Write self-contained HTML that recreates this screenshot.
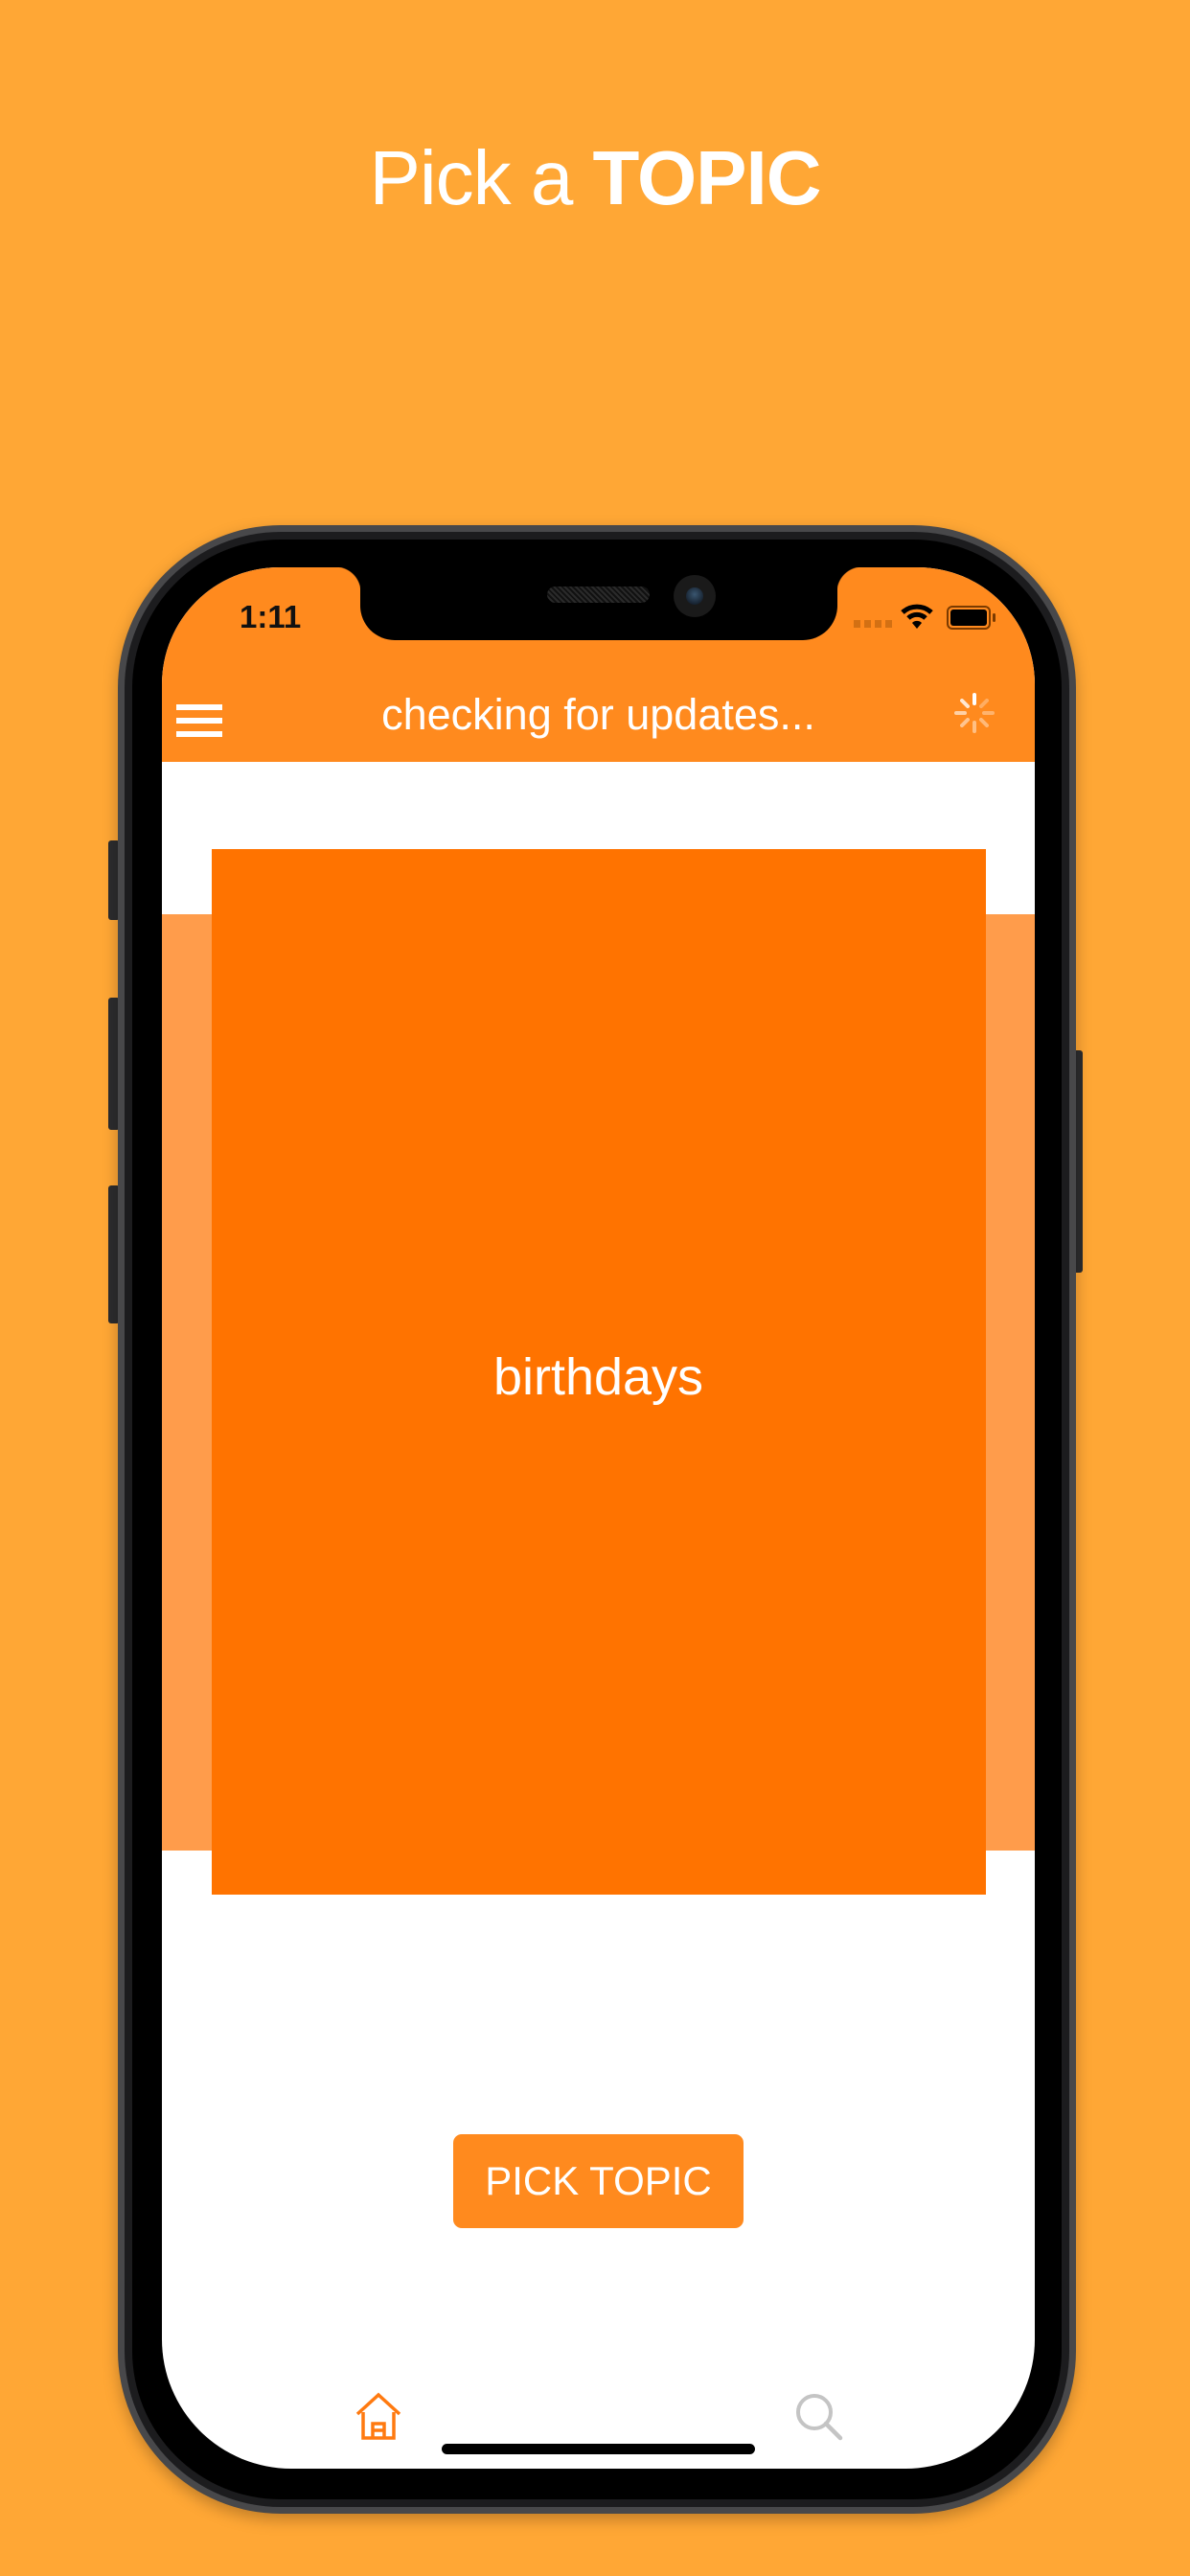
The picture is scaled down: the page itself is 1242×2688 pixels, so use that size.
<!DOCTYPE html>
<html><head><meta charset="utf-8"><style>
*{margin:0;padding:0;box-sizing:border-box}
body{width:1242px;height:2688px;background:#FFA735;position:relative;overflow:hidden;font-family:"Liberation Sans",sans-serif}
.abs{position:absolute}
h1{position:absolute;top:140px;left:0;width:1242px;text-align:center;color:#fff;font-weight:400;font-size:80px;letter-spacing:-1px}
h1 b{font-weight:700}
.btn{background:#2c2c2e}
</style></head><body>
<h1>Pick a <b>TOPIC</b></h1>
<div class="abs btn" style="left:113px;top:877px;width:12px;height:83px;border-radius:3px"></div>
<div class="abs btn" style="left:113px;top:1041px;width:12px;height:138px;border-radius:3px"></div>
<div class="abs btn" style="left:113px;top:1237px;width:12px;height:144px;border-radius:3px"></div>
<div class="abs btn" style="left:1118px;top:1096px;width:12px;height:232px;border-radius:3px"></div>
<div class="abs" style="left:123px;top:548px;width:1000px;height:2075px;border-radius:170px;background:#48484a;box-shadow:0 6px 16px rgba(0,0,0,.25)"></div>
<div class="abs" style="left:130px;top:555px;width:986px;height:2061px;border-radius:163px;background:#1c1c1e"></div>
<div class="abs" style="left:138px;top:563px;width:970px;height:2045px;border-radius:155px;background:#000"></div>
<div class="abs" style="left:169px;top:592px;width:911px;height:1984px;border-radius:122px 122px 135px 135px;background:#fff;overflow:hidden">
  <div class="abs" style="left:0;top:0;width:911px;height:203px;background:#FF8A1E"></div>
  <div class="abs" style="left:0;top:362px;width:911px;height:977px;background:#FF9C4B"></div>
  <div class="abs" style="left:52px;top:294px;width:808px;height:1091px;background:#FF7300"></div>
  <div class="abs" style="left:0;top:814px;width:911px;text-align:center;color:#fff;font-size:54px">birthdays</div>
  <div class="abs" style="left:304px;top:1635px;width:303px;height:98px;border-radius:9px;background:#FF8A1E;color:#fff;font-size:42px;text-align:center;line-height:98px">PICK TOPIC</div>
  <div class="abs" style="left:81px;top:33px;color:#111;font-size:33px;font-weight:700">1:11</div>
  <div class="abs" style="left:722px;top:55px;width:40px;height:8px;background:repeating-linear-gradient(90deg,#c86a10 0 7px,transparent 7px 11px);opacity:.8"></div>
  <svg class="abs" style="left:770px;top:36px" width="36" height="30" viewBox="0 0 36 30"><path d="M3 11 A22 22 0 0 1 33 11" stroke="#000" stroke-width="5" fill="none"/><path d="M9 17 A13 13 0 0 1 27 17" stroke="#000" stroke-width="5" fill="none"/><path d="M13 22 L18 28 L23 22 A7 7 0 0 0 13 22Z" fill="#000"/></svg>
  <div class="abs" style="left:819px;top:40px;width:46px;height:25px;border:2px solid #7a3a00;border-radius:6px;padding:2px"><div style="width:100%;height:100%;background:#000;border-radius:3px"></div></div>
  <div class="abs" style="left:867px;top:48px;width:3px;height:9px;background:#7a3a00;border-radius:2px"></div>
  <div class="abs" style="left:15px;top:143px;width:48px;height:6px;background:#fff"></div>
  <div class="abs" style="left:15px;top:157px;width:48px;height:6px;background:#fff"></div>
  <div class="abs" style="left:15px;top:171px;width:48px;height:6px;background:#fff"></div>
  <div class="abs" style="left:0;top:128px;width:911px;text-align:center;color:#fff;font-size:45px">checking for updates...</div>
  <svg class="abs" style="left:826px;top:130px" width="44" height="44" viewBox="-22 -22 44 44">
    <g stroke="#fff" stroke-width="4" stroke-linecap="round">
      <line x1="0" y1="-10" x2="0" y2="-19" opacity="1"/>
      <line x1="7" y1="-7" x2="13" y2="-13" opacity=".3"/>
      <line x1="10" y1="0" x2="19" y2="0" opacity=".35"/>
      <line x1="7" y1="7" x2="13" y2="13" opacity=".4"/>
      <line x1="0" y1="10" x2="0" y2="19" opacity=".45"/>
      <line x1="-7" y1="7" x2="-13" y2="13" opacity=".5"/>
      <line x1="-10" y1="0" x2="-19" y2="0" opacity=".6"/>
      <line x1="-7" y1="-7" x2="-13" y2="-13" opacity=".8"/>
    </g></svg>
  <svg class="abs" style="left:201px;top:1904px" width="50" height="52" viewBox="0 0 50 52"><path d="M3 23 L25 3 L47 23" stroke="#FF7A10" stroke-width="3.5" fill="none"/><path d="M9 21 V48 H41 V21 M19 48 V33 H31 V48 M19 40 H31" stroke="#FF7A10" stroke-width="3.5" fill="none"/></svg>
  <svg class="abs" style="left:660px;top:1904px" width="52" height="52" viewBox="0 0 52 52"><circle cx="21" cy="21" r="17" stroke="#c4c4c4" stroke-width="4" fill="none"/><line x1="33" y1="33" x2="48" y2="48" stroke="#c4c4c4" stroke-width="4.5" stroke-linecap="round"/></svg>
  <div class="abs" style="left:292px;top:1958px;width:327px;height:11px;border-radius:6px;background:#000"></div>
</div>
<div class="abs" style="left:376px;top:588px;width:498px;height:80px;background:#000;border-radius:0 0 36px 36px"></div>
<div class="abs" style="left:350px;top:588px;width:30px;height:30px;background:radial-gradient(circle at 0 100%,transparent 26px,#000 27px)"></div>
<div class="abs" style="left:870px;top:588px;width:30px;height:30px;background:radial-gradient(circle at 100% 100%,transparent 26px,#000 27px)"></div>
<div class="abs" style="left:571px;top:612px;width:107px;height:17px;border-radius:9px;background:repeating-linear-gradient(45deg,#2a2a2a 0 2px,#111 2px 4px)"></div>
<div class="abs" style="left:703px;top:600px;width:44px;height:44px;border-radius:50%;background:#1a1a1a"></div>
<div class="abs" style="left:716px;top:613px;width:18px;height:18px;border-radius:50%;background:radial-gradient(circle at 50% 40%,#3a5670,#0a0f18)"></div>
</body></html>
